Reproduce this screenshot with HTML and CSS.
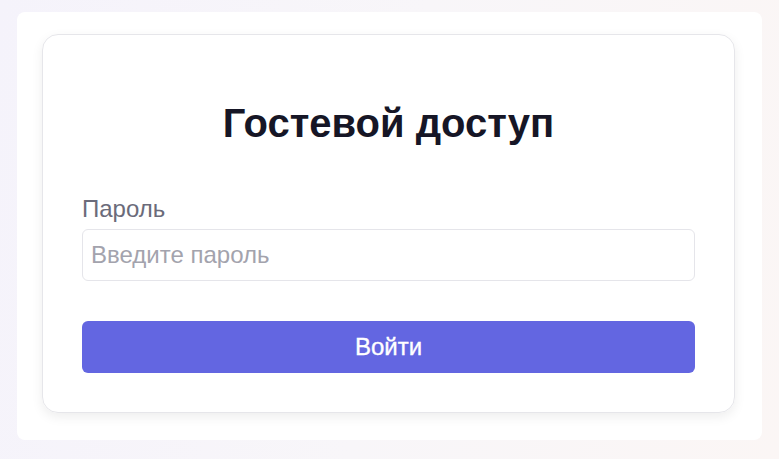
FILE: index.html
```html
<!DOCTYPE html>
<html lang="ru">
<head>
<meta charset="utf-8">
<title>Гостевой доступ</title>
<link rel="stylesheet" href="styles.css">
</head>
<body>
<div class="panel">
  <div class="card">
    <h1 class="title">Гостевой доступ</h1>
    <form class="form">
      <label class="label" for="pw">Пароль</label>
      <input class="input" id="pw" type="password" placeholder="Введите пароль">
      <button class="btn" type="button">Войти</button>
    </form>
  </div>
</div>
</body>
</html>
```
FILE: styles.css
```css
html, body { height: 100%; }
body {
  margin: 0;
  padding: 12px 17px 19px;
  box-sizing: border-box;
  background: linear-gradient(100deg, #f5f3fb 0%, #f8f6f9 50%, #fbf6f5 100%);
  font-family: "Liberation Sans", Arial, sans-serif;
}
.panel {
  background: #fff;
  border-radius: 8px;
  padding: 22px 27px 27px 25px;
  height: 100%;
  box-sizing: border-box;
}
.card {
  border: 1px solid #e6e6ea;
  border-radius: 16px;
  box-shadow: 0 4px 12px rgba(0,0,0,0.07);
  padding: 64px 39px 39px;
  box-sizing: border-box;
}
.title {
  margin: 0;
  text-align: center;
  font-size: 40px;
  font-weight: 700;
  line-height: 48px;
  color: #161626;
}
.form {
  display: flex;
  flex-direction: column;
  margin-top: 48px;
}
.label {
  font-size: 24px;
  color: #6b6b7a;
  line-height: 28px;
  margin-bottom: 6px;
}
.input {
  height: 52px;
  border: 1px solid #e5e5ea;
  border-radius: 6px;
  padding: 0 8px;
  font-family: inherit;
  font-size: 24px;
  color: #222;
  box-sizing: border-box;
  outline: none;
}
.input::placeholder { color: #a3a3ad; }
.btn {
  margin-top: 40px;
  height: 52px;
  border: 0;
  border-radius: 6px;
  background: #6366e1;
  color: #fff;
  font-family: inherit;
  font-size: 24px;
  font-weight: 500;
  -webkit-text-stroke: 0.35px #fff;
}
```
